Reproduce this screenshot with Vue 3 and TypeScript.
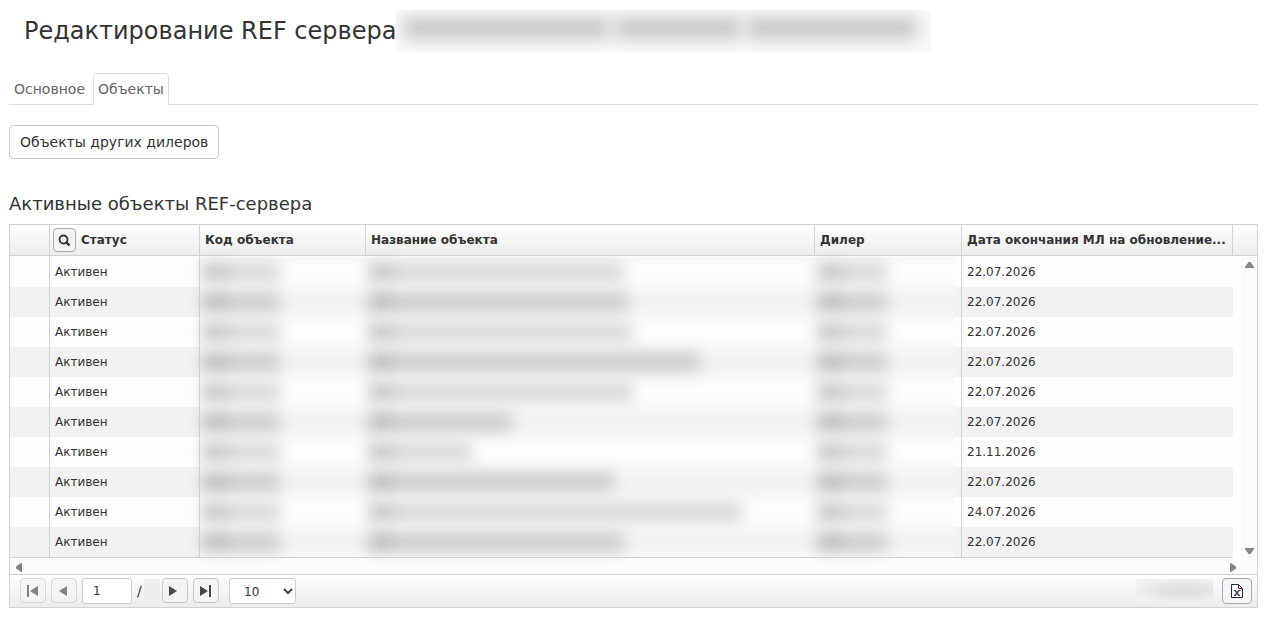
<script setup lang="ts">
import { ref } from 'vue'

interface Row {
  name: number
  date: string
}

const rows: Row[] = [
  { name: 256, date: '22.07.2026' },
  { name: 260, date: '22.07.2026' },
  { name: 264, date: '22.07.2026' },
  { name: 332, date: '22.07.2026' },
  { name: 265, date: '22.07.2026' },
  { name: 144, date: '22.07.2026' },
  { name: 104, date: '21.11.2026' },
  { name: 246, date: '22.07.2026' },
  { name: 373, date: '24.07.2026' },
  { name: 256, date: '22.07.2026' },
]

const page = ref('1')
const pageSize = ref('10')
</script>

<template>
  <main class="page">
    <header class="head">
      <h1>Редактирование REF сервера</h1>
      <span class="title-mask"><i class="m1"></i><i class="m2"></i><i class="m3"></i></span>
    </header>

    <nav class="tabs">
      <a class="tab" href="#main">Основное</a>
      <a class="tab active" href="#objects" aria-current="page">Объекты</a>
    </nav>

    <button class="other" type="button">Объекты других дилеров</button>

    <h2>Активные объекты REF-сервера</h2>

    <section class="grid">
      <table>
        <colgroup>
          <col class="c-mark" />
          <col class="c-status" />
          <col class="c-code" />
          <col />
          <col class="c-dealer" />
          <col class="c-date" />
          <col class="c-scroll" />
        </colgroup>
        <thead>
          <tr>
            <th></th>
            <th class="with-search">
              <div class="th-row">
                <button class="search" type="button" aria-label="Поиск">
                  <svg width="13" height="13" viewBox="0 0 13 13" fill="none" stroke="#333">
                    <circle cx="5.5" cy="5.5" r="4" stroke-width="1.8" />
                    <path d="M8 8l3.500 3.500" stroke-width="2.4" />
                  </svg>
                </button>
                <span>Статус</span>
              </div>
            </th>
            <th>Код объекта</th>
            <th>Название объекта</th>
            <th>Дилер</th>
            <th>Дата окончания МЛ на обновление...</th>
            <th></th>
          </tr>
        </thead>
        <tbody>
          <tr v-for="(row, i) in rows" :key="i">
            <td></td>
            <td>Активен</td>
            <td class="soft"><i class="smear code"></i></td>
            <td class="soft"><i class="smear" :style="{ width: row.name + 'px' }"></i></td>
            <td class="soft last"><i class="smear dealer"></i></td>
            <td>{{ row.date }}</td>
            <td v-if="i === 0" class="scroll" :rowspan="rows.length">
              <div class="vbar">
                <svg width="9" height="6" viewBox="0 0 9 6"><path d="M0 6V5L3.500 0h2L9 5v1z" fill="#868686" /></svg>
                <svg width="9" height="6" viewBox="0 0 9 6"><path d="M0 0v1l3.500 5h2L9 1V0z" fill="#868686" /></svg>
              </div>
            </td>
          </tr>
        </tbody>
      </table>

      <div class="hbar">
        <svg width="6" height="9" viewBox="0 0 6 9"><path d="M6 0H5L0 3.500v2L5 9h1z" fill="#868686" /></svg>
        <svg width="6" height="9" viewBox="0 0 6 9"><path d="M0 0h1l5 3.500v2L1 9H0z" fill="#868686" /></svg>
      </div>

      <footer class="pager">
        <button class="nav" type="button" disabled aria-label="Первая страница">
          <svg width="12" height="12" viewBox="0 0 12 12" fill="#444"><path d="M0 0h2v12H0zM11 1v10L3 6z" /></svg>
        </button>
        <button class="nav" type="button" disabled aria-label="Предыдущая страница">
          <svg width="12" height="12" viewBox="0 0 12 12" fill="#444"><path d="M9 1v10L1 6z" /></svg>
        </button>
        <input v-model="page" class="num" type="text" aria-label="Страница" />
        <span class="slash">/</span>
        <span class="total"></span>
        <button class="nav" type="button" aria-label="Следующая страница">
          <svg width="12" height="12" viewBox="0 0 12 12" fill="#484848"><path d="M0 1v10l8-5z" /></svg>
        </button>
        <button class="nav" type="button" aria-label="Последняя страница">
          <svg width="12" height="12" viewBox="0 0 12 12" fill="#484848"><path d="M0 1v10l8-5zM9 0h2v12H9z" /></svg>
        </button>
        <span class="size">
          <select v-model="pageSize" aria-label="Строк на странице">
            <option>10</option>
            <option>20</option>
            <option>50</option>
          </select>
          <svg class="chev" width="10" height="7" viewBox="0 0 10 7" fill="none" stroke="#444" stroke-width="2"><path d="M1 1l4 4 4-4" /></svg>
        </span>
        <span class="info"></span>
        <button class="excel" type="button" aria-label="Экспорт в Excel">
          <svg width="12" height="14" viewBox="0 0 12 14" fill="none" stroke="#222c40">
            <path d="M.5.5h7l4 4v9H.5z" fill="#fff" />
            <path d="M7.500.5v4h4" stroke="#62225c" />
            <path d="M4 6.500l4 5M8 6.500l-4 5" stroke="#3a4a70" stroke-width="1.500" />
            <path d="M3 6.500h2M7 6.500h2M3 11.500h2M7 11.500h2" stroke="#3a4a70" />
          </svg>
        </button>
      </footer>
    </section>
  </main>
</template>

<style>
body {
  margin: 0;
  background: #fff;
}
</style>

<style scoped>
.page {
  box-sizing: border-box;
  padding: 10px 10px 16px 9px;
  font-family: "DejaVu Sans", Verdana, sans-serif;
  font-size: 12px;
  color: #333;
}
button,
input,
select {
  box-sizing: border-box;
  margin: 0;
  font-family: inherit;
  color: #333;
}
button {
  padding: 0;
}
svg {
  display: block;
}
.head {
  display: flex;
  height: 42px;
  padding-left: 15px;
}
h1 {
  margin: 0;
  font-size: 24px;
  font-weight: 400;
  line-height: 42px;
  white-space: nowrap;
}
.title-mask {
  display: flex;
  align-items: center;
  gap: 6px;
  box-sizing: border-box;
  width: 535px;
  padding: 0 14px 6px 8px;
  overflow: hidden;
  background: #f9f9f9;
}
.title-mask i {
  height: 22px;
  background: #c8c8c8;
  filter: blur(8px);
}
.m1 { flex: 18; }
.m2 { flex: 11; }
.m3 { flex: 15; }
.tabs {
  display: flex;
  margin-top: 21px;
  border-bottom: 1px solid #ddd;
}
.tab {
  padding: 0 4px;
  border: 1px solid transparent;
  border-bottom: 0;
  font-size: 14px;
  line-height: 30px;
  color: #666;
  text-decoration: none;
}
.tab + .tab {
  margin-left: 3px;
}
.active {
  margin-bottom: -1px;
  padding-bottom: 1px;
  border-color: #ddd;
  border-radius: 4px 4px 0 0;
  background: #fff;
}
.other {
  display: block;
  height: 34px;
  margin-top: 20px;
  padding: 0 10px;
  border: 1px solid #ccc;
  border-radius: 4px;
  background: #fff;
  font-size: 14px;
}
h2 {
  margin: 33px 0 8px;
  font-size: 18px;
  font-weight: 400;
  line-height: 24px;
}
.grid {
  border: 1px solid #d2d2d2;
  background: #fdfdfd;
}
table {
  width: 100%;
  table-layout: fixed;
  border-collapse: separate;
  border-spacing: 0;
}
.c-mark { width: 40px; }
.c-status { width: 150px; }
.c-code { width: 166px; }
.c-dealer { width: 147px; }
.c-date { width: 271px; }
.c-scroll { width: 24px; }
th,
td {
  box-sizing: border-box;
  height: 30px;
  padding: 0 5px;
  border-right: 1px solid #d2d2d2;
  text-align: left;
  white-space: nowrap;
  overflow: hidden;
}
thead tr {
  background: linear-gradient(#fefefe, #ececec);
}
th {
  height: 31px;
  border-bottom: 1px solid #d2d2d2;
  font-weight: 700;
}
th:last-child {
  border-right: 0;
}
.with-search {
  padding-left: 3px;
}
.th-row {
  display: flex;
  align-items: center;
  gap: 5px;
}
.search {
  display: flex;
  align-items: center;
  justify-content: center;
  width: 23px;
  height: 24px;
  border: 1px solid #aaa;
  border-radius: 4px;
  background: #f4f4f4;
}
tbody tr:first-child td {
  height: 31px;
  border-top: 1px solid #fff;
}
tbody tr:nth-child(even) td {
  background-color: #f2f2f2;
}
tbody tr:last-child td {
  height: 31px;
  border-bottom: 1px solid #d2d2d2;
}
td:nth-child(6) {
  border-right-color: transparent;
}
td.soft {
  padding: 0 0 0 2px;
  border-right: 0;
  background-image: linear-gradient(#f8f8f8, #fdfdfd 40%, #fdfdfd 60%, #f8f8f8);
  background-repeat: no-repeat;
  overflow: visible;
}
tbody tr:nth-child(even) td.soft {
  background-image: linear-gradient(#f8f8f8, #f2f2f2 40%, #f2f2f2 60%, #f8f8f8);
}
td.soft.last {
  border-right: 1px solid #d2d2d2;
  background-size: calc(100% - 7px) 100%;
}
.smear {
  display: block;
  height: 20px;
  background: linear-gradient(90deg, #cbcbcb, #cbcbcb 20px, #dadada 34px, #dadada);
  filter: blur(7px);
}
tbody tr:nth-child(even) .smear {
  background: linear-gradient(90deg, #c3c3c3, #c3c3c3 20px, #d0d0d0 34px, #d0d0d0);
}
.code {
  width: 78px;
}
.dealer {
  width: 70px;
}
tbody tr:first-child td.scroll {
  height: auto;
  padding: 0 0 0 8px;
  border-right: 0;
  border-bottom: 0;
  background: #fff;
}
.vbar {
  display: flex;
  flex-direction: column;
  align-items: center;
  justify-content: space-between;
  box-sizing: border-box;
  height: 301px;
  padding: 5px 0 4px;
  background: #fbfbfb;
}
.hbar {
  display: flex;
  align-items: center;
  justify-content: space-between;
  box-sizing: border-box;
  height: 17px;
  padding: 3px 21px 0 6px;
  border-bottom: 1px solid #d2d2d2;
  background: #fcfcfc;
}
.pager {
  display: flex;
  align-items: center;
  gap: 5px;
  height: 31px;
  padding: 0 5px 1px 10px;
  background: linear-gradient(#fefefe, #ececec);
}
.nav {
  display: flex;
  align-items: center;
  justify-content: center;
  width: 26px;
  height: 25px;
  border: 1px solid #c6c6c6;
  border-radius: 4px;
  background: #f4f4f4;
}
.nav:disabled {
  opacity: 0.65;
}
.num {
  width: 50px;
  height: 26px;
  padding: 1px 10px 0;
  border: 1px solid #ccc;
  border-radius: 3px;
  background: #fff;
  font-size: 12px;
}
.slash {
  width: 5px;
  font-size: 14px;
}
.total {
  width: 16px;
  height: 23px;
  margin: 0 -3px;
  background: #eee;
}
.size {
  position: relative;
  margin-left: 5px;
}
select {
  display: block;
  width: 67px;
  height: 26px;
  padding: 2px 14px 0;
  border: 1px solid #ccc;
  border-radius: 3px;
  background: #fff;
  font-size: 12px;
  appearance: none;
}
.chev {
  position: absolute;
  top: 10px;
  right: 3px;
  pointer-events: none;
}
.info {
  width: 77px;
  height: 24px;
  margin: 0 4px 0 auto;
  background: radial-gradient(ellipse at 62% 50%, #dedede, #e4e4e4 35%, #f1f1f1 75%);
}
.excel {
  display: flex;
  align-items: center;
  justify-content: center;
  width: 30px;
  height: 26px;
  border: 1px solid #aaa;
  border-radius: 4px;
  background: #f6f6f6;
}
</style>
